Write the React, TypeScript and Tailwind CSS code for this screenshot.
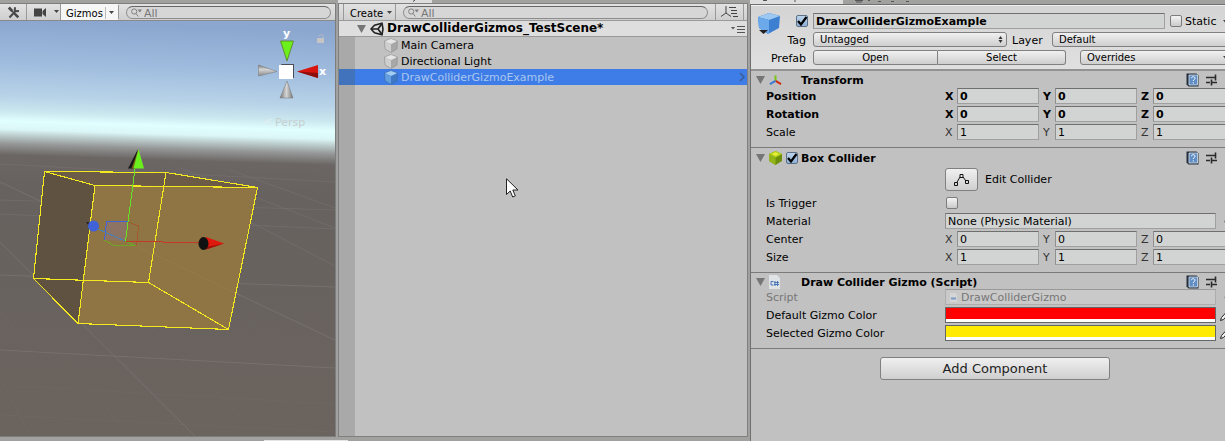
import React from "react";

const buttonFace = "bg-linear-to-b from-[#f0f0f0] to-[#cfcfcf] border border-[#808080]";
const inputFace =
  "h-4 min-w-0 bg-[#d2d4d3] border border-t-[#6f6f6f] border-l-[#8f8f8f] border-r-[#a0a0a0] border-b-[#a0a0a0] pl-0.5 text-black outline-none";

function ToolsIcon() {
  return (
    <svg width="13" height="13" viewBox="0 0 13 13" fill="none" stroke="#4a4a4a" aria-hidden="true">
      <path d="M2.5 11.5 9 4.5" strokeWidth="2" />
      <path d="M8 1.2 7.8 4 9 5.2 12 5" strokeWidth="2" />
      <path d="m1.8 1.5 3.6 3.8" strokeWidth="2.8" />
      <path d="m7.6 7.6 3.7 3.8" strokeWidth="2.6" />
      <path d="m5 5 3 3" strokeWidth="1.4" />
    </svg>
  );
}

function Caret({ className = "" }: { className?: string }) {
  return (
    <svg className={className} width="5" height="3" viewBox="0 0 5 3" aria-hidden="true">
      <path d="M0 0h5L2.5 3z" fill="#444" />
    </svg>
  );
}

function Search({ label }: { label: string }) {
  return (
    <label className="flex h-[13px] min-w-0 flex-1 items-center gap-0.5 rounded-full border border-[#8c8c8c] border-t-[#666] bg-[#d6d6d6] pl-1">
      <svg className="shrink-0" width="11" height="9" viewBox="0 0 11 9" fill="none" stroke="#808080" aria-hidden="true">
        <circle cx="3.2" cy="3.5" r="2.6" />
        <path d="m5 5.5 2.3 3" />
        <path d="M6.5 1.5h4.5L8.8 4.5z" fill="#808080" stroke="none" />
      </svg>
      <input
        aria-label={label}
        placeholder="All"
        className="h-[13px] min-w-0 flex-1 bg-transparent pt-px text-[11px] leading-3 text-[#555] outline-none placeholder:text-[#777]"
      />
    </label>
  );
}

function SceneDrawing() {
  return (
    <svg
      className="block min-h-0 w-full flex-1"
      viewBox="0 21 335 415"
      preserveAspectRatio="xMidYMid slice"
      role="img"
      aria-label="Scene view with a box collider gizmo"
    >
      <defs>
        <linearGradient id="sky" gradientUnits="userSpaceOnUse" x1="0" y1="21" x2="-13" y2="436">
          <stop offset="0" stopColor="#8ca7cf" />
          <stop offset="0.1" stopColor="#9fbcde" />
          <stop offset="0.18" stopColor="#b8d3e8" />
          <stop offset="0.215" stopColor="#cae6ee" />
          <stop offset="0.24" stopColor="#e1ffff" />
          <stop offset="0.26" stopColor="#dbf6f7" />
          <stop offset="0.275" stopColor="#bccccc" />
          <stop offset="0.295" stopColor="#959797" />
          <stop offset="0.322" stopColor="#6b6664" />
          <stop offset="0.4" stopColor="#67625f" />
          <stop offset="1" stopColor="#6b635e" />
        </linearGradient>
        <linearGradient id="greyCone" x1="0" x2="1" y1="0" y2="0">
          <stop offset="0" stopColor="#777" />
          <stop offset="0.5" stopColor="#d4d4d4" />
          <stop offset="1" stopColor="#777" />
        </linearGradient>
        <linearGradient id="greyConeSide" x1="0" x2="0" y1="0" y2="1">
          <stop offset="0" stopColor="#777" />
          <stop offset="0.4" stopColor="#d4d4d4" />
          <stop offset="1" stopColor="#8a8a8a" />
        </linearGradient>
      </defs>
      <rect x="0" y="21" width="335" height="415" fill="url(#sky)" />

      <g stroke="#7a7674" strokeOpacity="0.75" fill="none">
        <path d="M0 242 195 436M0 350 335 368M0 275 335 287M0 182 335 340" />
        <path d="M0 214 335 229M0 200 335 210M150 170 335 266M180 168 335 228M230 170 335 208M0 164 335 182" strokeOpacity="0.5" />
        <path d="M0 378 30 436M0 310 90 436M40 330 130 436M90 325 190 436M150 325 260 436M210 330 330 425M0 385 335 404M0 415 335 432M225 310 335 368" strokeOpacity="0.2" />
      </g>

      <path d="M44 171.500 95 185 78 323 33.500 278.500Z" fill="#5f5241" />
      <path d="M44 171.500 166 172.500 257 187.500 95 185Z" fill="#6c5b47" />
      <path d="M95 185 257 187.500 228.500 329.500 78 323Z" fill="#8f7444" />
      <path d="M134 245 240 295" stroke="#9a8055" strokeOpacity="0.5" />
      <g fill="none" stroke="#f4e91f" strokeWidth="1.1" shapeRendering="crispEdges">
        <path d="M44.500 171.500 166 172.500 257.500 187.500 95 185.500Z" />
        <path d="M33.500 278.500 148.500 282.500 228.500 329.500 78 323.500Z" />
        <path d="M44.500 171.500 33.500 278.500M95 185.500 78 323.500M166 172.500 148.500 282.500M257.500 187.500 228.500 329.500" />
      </g>

      <path d="M106 221h22l-3 20-21-1z" fill="#8c7363" />
      <g fill="none" shapeRendering="crispEdges">
        <path d="m128 222 10.500 4-2 20" stroke="#a2592e" />
        <path d="m104 240 10 5.500 22 .5-11-5" stroke="#70a32a" />
        <path d="M104.500 240.500 106.500 221.500H128" stroke="#3e66d8" />
        <path d="M125 241 98 229" stroke="#4a80b4" />
        <path d="M125 241 200 243" stroke="#c63a25" />
        <path d="M125.500 241 135 169" stroke="#66e324" />
      </g>
      <path d="m138 149-10 19.500h6z" fill="#171717" />
      <path d="m138.500 149-7 19.500h4z" fill="#7a6618" />
      <path d="m138.500 149 5.500 19.500h-10.500z" fill="#6bf01e" />
      <path d="m206 237 18 6.500-18 6z" fill="#e0190f" />
      <path d="m206 247 18-3.500-18 6z" fill="#9c100a" />
      <ellipse cx="203.500" cy="243.500" rx="5" ry="6.500" fill="#111" />
      <path d="m86 222 6 1v7z" fill="#1b1b1b" />
      <circle cx="93.500" cy="226" r="5.500" fill="#3f62d8" />

      <path d="m280.500 41 6.500 20 6.500-20z" fill="#6cf01c" stroke="#5e7d20" strokeWidth=".8" />
      <path d="m318 65-21 6.500 21 6.500z" fill="#d8160f" />
      <path d="m318 73-21-1.500 21 6.500z" fill="#8c0f0b" />
      <path d="m258.500 65 18.500 6.500-18.500 4.500z" fill="url(#greyConeSide)" stroke="#777" strokeWidth=".5" />
      <path d="m287 81-7 17h13z" fill="url(#greyCone)" stroke="#777" strokeWidth=".5" />
      <path d="M281 64h13v14h-5z" fill="#4a4e58" />
      <path d="M279 65h14v14h-14z" fill="#fff" />
      <g fill="#fff" fontFamily="DejaVu Sans, sans-serif" fontSize="11" fontWeight="700">
        <text x="283" y="37">y</text>
        <text x="319" y="75">x</text>
      </g>
      <path d="m272 119-9 3 9 3M264 122h8" fill="none" stroke="#dceef0" />
      <text x="275" y="126" fill="#c6cfd0" fontFamily="DejaVu Sans, sans-serif" fontSize="11">
        Persp
      </text>
      <path d="M317 38h7v5h-7z" fill="#c4c4c4" />
      <path d="M319 36.500c0-2.500 4-2.500 4 0V39" fill="none" stroke="#b9bec6" />
    </svg>
  );
}

function CubeIcon({ blue = false }: { blue?: boolean }) {
  return (
    <svg className="shrink-0" width="14" height="15" viewBox="0 0 14 15" aria-hidden="true">
      <path d="M7 .5 13.500 3 13 11 7 14.500 1 11 .5 3z" fill={blue ? "#3f78c4" : "#a8a8a8"} />
      <path d="M7 .5 13.500 3 7 6 .5 3z" fill={blue ? "#a4cdf4" : "#e6e6e6"} />
      <path d="M.5 3 7 6v8.500L1 11z" fill={blue ? "#629ee0" : "#cfcfcf"} />
      <path d="M7 .5 13.500 3 13 11 7 14.500 1 11 .5 3z" fill="none" stroke={blue ? "#3568ae" : "#8f8f8f"} strokeWidth=".6" />
    </svg>
  );
}

function UnityIcon() {
  return (
    <svg className="shrink-0" width="14" height="14" viewBox="0 0 14 14" fill="none" stroke="#222" aria-hidden="true">
      <path d="M1 7 4.500 3.200 12 1.200 13 7 12 12.800 4.500 10.800z" strokeWidth="1.600" />
      <path d="M1 7h7M8 7l4-5.500M8 7l4 5.500" strokeWidth="1.700" />
    </svg>
  );
}

function Foldout() {
  return (
    <svg className="shrink-0" width="9" height="8" viewBox="0 0 9 8" aria-hidden="true">
      <path d="M0 0h9L4.500 8z" fill="#757575" />
    </svg>
  );
}

function Hierarchy() {
  return (
    <section aria-label="Hierarchy" className="flex min-w-0 flex-col">
      <div className="h-[3px] overflow-hidden">
        <svg className="block" width="94" height="3" aria-hidden="true">
          <path d="M0 0h94v3H0z" fill="#dedede" />
          <path d="m77 0-2 1.500" stroke="#444" />
        </svg>
      </div>
      <div className="flex flex-1 flex-col border border-[#808080] bg-[#c1c1c1]">
        <div className="flex h-4 items-center bg-linear-to-b from-[#e2e2e2] to-[#cfcfcf] text-[11px]">
          <button className="ml-1 flex h-4 w-[53px] items-center gap-1 border-x border-[#999] pt-0.5 pl-1.5 text-[10px]">
            Create <Caret className="mb-0.5" />
          </button>
          <div className="flex min-w-0 flex-1 pt-px pr-[7px] pl-[7px]">
            <Search label="Search hierarchy" />
          </div>
          <button aria-label="Sort objects" className="mr-[3px] flex h-4 w-[29px] items-center justify-center border-x border-[#999]">
            <svg width="17" height="12" viewBox="0 0 17 12" fill="none" stroke="#444" aria-hidden="true">
              <path d="M5 0v7L0 10.500M5 7l5 3.500M8 1.500h7M10 4.500h6M10 7.500h6M12 10.500h5" />
            </svg>
          </button>
        </div>
        <div className="flex h-[17px] items-center border-y border-t-[#999] border-b-[#999] bg-[#dedede] pl-[18px] text-[12px] font-bold">
          <Foldout />
          <span className="flex items-center gap-[3px] pl-1">
            <UnityIcon />
            <span className="whitespace-nowrap">DrawColliderGizmos_TestScene*</span>
          </span>
          <button aria-label="Scene menu" className="mr-0.5 ml-auto">
            <svg className="block" width="14" height="8" viewBox="0 0 14 8" stroke="#555" aria-hidden="true">
              <path d="M0 2h4L2 4.500z" fill="#555" stroke="none" />
              <path d="M6 1.500h8M6 4.500h8M6 7.500h8" />
            </svg>
          </button>
        </div>
        <ul className="flex-1 bg-linear-to-r from-[#a9a9a9] from-[16px] to-[#c1c1c1] to-[16px]">
          <li className="flex h-4 items-center gap-[3px] pl-[45px]">
            <CubeIcon />
            Main Camera
          </li>
          <li className="flex h-4 items-center gap-[3px] pl-[45px]">
            <CubeIcon />
            Directional Light
          </li>
          <li className="flex h-4 items-center gap-[3px] bg-linear-to-r from-[#4173bd] from-[16px] to-[#3e7de7] to-[16px] pr-0.5 pl-[45px] text-[#a9c6ef]">
            <CubeIcon blue />
            DrawColliderGizmoExample
            <svg className="ml-auto" width="6" height="10" viewBox="0 0 6 10" fill="none" stroke="#3b5c94" strokeWidth="1.500" aria-hidden="true">
              <path d="m1 1 4 4-4 4" />
            </svg>
          </li>
        </ul>
      </div>
    </section>
  );
}

function Check({ label, checked = false }: { label: string; checked?: boolean }) {
  return (
    <span className="relative inline-flex size-3 shrink-0">
      <input
        type="checkbox"
        aria-label={label}
        defaultChecked={checked}
        className="peer size-3 appearance-none rounded-[2px] border border-[#7c7c7c] bg-linear-to-b from-[#f4f4f4] to-[#cacaca] checked:border-[#5b7086] checked:from-[#bcd3ea] checked:to-[#8fb2d8]"
      />
      <svg
        className="pointer-events-none absolute inset-0 hidden peer-checked:block"
        width="12"
        height="12"
        viewBox="0 0 12 12"
        fill="none"
        stroke="#000"
        strokeWidth="2.200"
        aria-hidden="true"
      >
        <path d="m2 6 3 3.500L10.500 2" />
      </svg>
    </span>
  );
}

function Popup({ label, value, className }: { label: string; value: string; className: string }) {
  return (
    <span className={`relative flex min-w-0 ${className}`}>
      <select
        id={label}
        className={`${buttonFace} h-[15px] w-full appearance-none rounded-[3px] pl-1.5 text-[10px] leading-3`}
      >
        <option>{value}</option>
      </select>
      <svg className="pointer-events-none absolute top-1 right-1" width="5" height="7" viewBox="0 0 5 7" fill="#333" aria-hidden="true">
        <path d="M2.500 0 4.500 3h-4zM2.500 7 .5 4h4z" />
      </svg>
    </span>
  );
}

function InspectorHeader() {
  return (
    <div className="flex h-16 border-t border-[#f0f0f0] bg-linear-to-b from-[#d4d4d4] to-[#e0e0e0] pt-[7px]">
      <div className="flex w-[62px] shrink-0 flex-col items-end gap-[3px] pr-[7px] leading-[17px]">
        <div className="flex h-4 w-full items-start justify-between pl-[7px]">
          <svg width="22" height="21" viewBox="0 0 22 21" className="shrink-0 overflow-visible" aria-hidden="true">
            <path d="m0 4 11-4 11 3-1 12-11 6L1 15z" fill="#3d7fd0" />
            <path d="m0 4 11-4 11 3-11 4z" fill="#9cc8f2" />
            <path d="m0 4 11 3v14L1 15z" fill="#6ba9ea" />
            <path d="M1 17h9l-4.500 4z" fill="#222" />
          </svg>
          <span className="mr-[-2px] flex pt-0.5">
            <Check label="Active" checked />
          </span>
        </div>
        <label htmlFor="Tag" className="h-[15px]">
          Tag
        </label>
        <span className="h-[15px]">Prefab</span>
      </div>
      <div className="flex min-w-0 flex-1 flex-col gap-[3px]">
        <div className="flex items-center">
          <input
            aria-label="Object name"
            defaultValue="DrawColliderGizmoExample"
            className={`${inputFace} flex-1 font-bold`}
          />
          <div className="flex w-[70px] items-center gap-[3px] pl-[5px]">
            <Check label="Static" />
            Static
            <Caret className="ml-1" />
          </div>
        </div>
        <div className="flex items-center">
          <Popup label="Tag" value="Untagged" className="flex-[194]" />
          <label htmlFor="Layer" className="h-[15px] w-[45px] pl-[5px] leading-[17px]">
            Layer
          </label>
          <Popup label="Layer" value="Default" className="flex-[183]" />
        </div>
        <div className="grid grid-cols-[125fr_128fr_169fr] text-[10px]">
          <button className={`${buttonFace} h-[15px] rounded-l-[3px] leading-3`}>Open</button>
          <button className={`${buttonFace} h-[15px] rounded-r-[3px] border-l-0 leading-3`}>Select</button>
          <button className={`${buttonFace} ml-3.5 flex h-[15px] items-center justify-between rounded-[3px] pr-1.5 pl-1.5 leading-3`}>
            Overrides <Caret />
          </button>
        </div>
      </div>
    </div>
  );
}

function TitleTools({ name }: { name: string }) {
  return (
    <span className="ml-auto flex items-center gap-[7px]">
      <button aria-label={`${name} help`}>
        <svg className="block" width="13" height="14" viewBox="0 0 13 14" aria-hidden="true">
          <path d="M.5.5h10l2 2v11h-10l-2-2z" fill="#26303c" />
          <path d="M3 2h8.500v10H3z" fill="#5f8dc4" stroke="#dbe6f2" strokeWidth=".8" />
          <path d="M5.500 5.200c0-2 3.500-2 3.500 0 0 1.300-1.700 1.200-1.700 2.800M7.300 9.300v1.200" stroke="#fff" fill="none" />
        </svg>
      </button>
      <button aria-label={`${name} presets`}>
        <svg className="block" width="11" height="12" viewBox="0 0 11 12" stroke="#2a2a2a" strokeWidth="1.600" aria-hidden="true">
          <path d="M0 3.500h7M0 8.500h4M6 8.500h5M9.500 .5v6M5.500 5.500v6M7 3.500h3" />
        </svg>
      </button>
      <button aria-label={`${name} menu`}>
        <svg className="block" width="11" height="11" viewBox="0 0 11 11" fill="none" stroke="#555" aria-hidden="true">
          <circle cx="6.500" cy="5.500" r="3" strokeWidth="2" />
          <path d="M1 5.500h2" strokeWidth="2" />
        </svg>
      </button>
    </span>
  );
}

function Title({ name, icon, enabled = false }: { name: string; icon: React.ReactNode; enabled?: boolean }) {
  return (
    <h2 className="flex h-4 items-center pt-0.5 pl-[5px] font-bold">
      <Foldout />
      <span className="flex w-[17px] shrink-0 items-center pl-1">{icon}</span>
      <span className="flex w-[19px] shrink-0 items-center pl-1">
        {enabled && <Check label={`${name} enabled`} checked />}
      </span>
      <span className="whitespace-nowrap">{name}</span>
      <TitleTools name={name} />
    </h2>
  );
}

function Row({ label, children, dim = false }: { label: string; children: React.ReactNode; dim?: boolean }) {
  return (
    <div className={`flex min-h-4 items-center pl-[15px] ${dim ? "text-[#777]" : ""}`}>
      <span className="w-[179px] shrink-0 whitespace-nowrap">{label}</span>
      {children}
    </div>
  );
}

function Vector({ label, value, bold = false }: { label: string; value: string; bold?: boolean }) {
  return (
    <div className={bold ? "font-bold" : ""}>
      <Row label={label}>
        <div className="grid min-w-0 flex-1 grid-cols-3 gap-1">
          {["X", "Y", "Z"].map((axis) => (
            <label key={axis} className="flex min-w-0 items-center">
              <span className={`w-3 shrink-0 ${bold ? "" : "text-[#333]"}`}>{axis}</span>
              <input aria-label={`${label} ${axis}`} defaultValue={value} className={`${inputFace} flex-1`} />
            </label>
          ))}
        </div>
      </Row>
    </div>
  );
}

function ColorField({ label, className }: { label: string; className: string }) {
  return (
    <Row label={label}>
      <button
        aria-label={label}
        className={`h-4 flex-1 border border-[#666] shadow-[inset_0_-3px_0_#fff] ${className}`}
      />
      <svg className="mr-1 ml-1" width="11" height="14" viewBox="0 0 11 14" aria-hidden="true">
        <path d="m.5 12.500 1-3L7 3.500l2 2-5.500 6z" fill="#eee" stroke="#222" />
        <path d="m6 3 3 3 1-4z" fill="#222" />
      </svg>
    </Row>
  );
}

function ScriptIcon() {
  return (
    <svg width="11" height="14" viewBox="0 0 11 14" aria-hidden="true">
      <path d="M0 0h8l3 3v11H0z" fill="#dfe3e6" />
      <path d="M4.500 6.500H2v3.500h2.500M6 6v5M8.500 6v5M5 7.500h5M5 9.500h5" fill="none" stroke="#4a76b8" />
    </svg>
  );
}

function Inspector() {
  return (
    <section aria-label="Inspector" className="flex min-w-0 flex-col overflow-hidden">
      <div className="h-1 shrink-0 overflow-hidden">
        <svg className="block" width="180" height="4" aria-hidden="true">
          <path d="M0 0h93v4H0z" fill="#dedede" />
          <path d="M13 .5h4M45 0v2M105 .5h8M106 2h6M118 .5h2M128 1.500h3M144 1.500h-3M159 1.500h-3" stroke="#555" />
        </svg>
      </div>
      <div className="flex flex-1 flex-col border-t border-l border-[#707070] bg-[#c1c1c1]">
        <div className="-mr-2.5">
          <InspectorHeader />
          <div className="border-t-2 border-[#929292] pb-[7px]">
            <Title
              name="Transform"
              icon={
                <svg width="14" height="13" viewBox="0 0 14 13" fill="none" strokeWidth="2.200" aria-hidden="true">
                  <path d="M7 7V1" stroke="#7cc41c" />
                  <path d="m7 7 6 3.500" stroke="#d62b12" />
                  <path d="m7 7-6 3.500" stroke="#3d78d0" />
                </svg>
              }
            />
            <div className="flex flex-col gap-0.5 pt-px">
              <Vector label="Position" value="0" bold />
              <Vector label="Rotation" value="0" bold />
              <Vector label="Scale" value="1" />
            </div>
          </div>
          <div className="border-t border-[#7a7a7a] pb-[7px]">
            <div className="pt-px">
              <Title
                name="Box Collider"
                enabled
                icon={
                  <svg width="13" height="14" viewBox="0 0 13 14" aria-hidden="true">
                    <path d="M6.500 0 13 3v7l-6.500 4L0 10V3z" fill="#6d8f0c" />
                    <path d="M6.500 0 13 3 6.500 6.500 0 3z" fill="#b9d821" />
                    <path d="m0 3 6.500 3.500V14L0 10z" fill="#93b51a" />
                    <path d="m6.500 1.500 3 1.500-3 1.500-3-1.500z" fill="#f4ee3a" />
                  </svg>
                }
              />
            </div>
            <div className="flex flex-col gap-0.5 pt-[3px]">
              <div className="flex items-center gap-[7px] pb-0.5 pl-[194px]">
                <button
                  id="edit-collider"
                  className={`${buttonFace} flex h-[23px] w-[33px] items-center justify-center rounded-[3px] border-[#555]`}
                  aria-label="Edit Collider"
                >
                  <svg width="15" height="12" viewBox="0 0 15 12" fill="none" stroke="#111" aria-hidden="true">
                    <path d="M2.500 9 6 3M9 3l3 4M.5 8.500h3v3h-3zM6 .5h3v3H6zM11.500 6.500h3v3h-3z" />
                  </svg>
                </button>
                <label htmlFor="edit-collider">Edit Collider</label>
              </div>
              <Row label="Is Trigger">
                <span className="flex pl-px">
                  <Check label="Is Trigger" />
                </span>
              </Row>
              <Row label="Material">
                <input aria-label="Material" defaultValue="None (Physic Material)" className={`${inputFace} flex-1`} />
                <svg className="mr-0.5 ml-2" width="9" height="9" viewBox="0 0 9 9" fill="none" stroke="#333" aria-hidden="true">
                  <circle cx="4.500" cy="4.500" r="3.500" />
                  <circle cx="4.500" cy="4.500" r="1" fill="#333" />
                </svg>
              </Row>
              <Vector label="Center" value="0" />
              <Vector label="Size" value="1" />
            </div>
          </div>
          <div className="border-t border-[#7a7a7a] pb-[7px]">
            <Title name="Draw Collider Gizmo (Script)" icon={<ScriptIcon />} />
            <div className="flex flex-col gap-0.5">
              <Row label="Script" dim>
                <span className="flex h-4 min-w-0 flex-1 items-center gap-1 border border-[#adadad] border-t-[#999] bg-[#c9c9c9] pl-1">
                  <svg width="7" height="9" viewBox="0 0 7 9" aria-hidden="true">
                    <path d="M0 0h5l2 2v7H0z" fill="#d3d5d7" />
                    <path d="M1 5.500h5" stroke="#7d9cc4" strokeWidth="2" />
                  </svg>
                  DrawColliderGizmo
                </span>
                <svg className="mr-0.5 ml-2" width="9" height="9" viewBox="0 0 9 9" fill="none" stroke="#777" aria-hidden="true">
                  <circle cx="4.500" cy="4.500" r="3.500" />
                </svg>
              </Row>
              <ColorField label="Default Gizmo Color" className="bg-[#ff0000]" />
              <ColorField label="Selected Gizmo Color" className="bg-[#ffea04]" />
            </div>
          </div>
        </div>
        <div className="flex justify-center border-t border-[#7a7a7a] pt-2 pl-[14px]">
          <button className={`${buttonFace} h-[23px] w-[230px] rounded-[3px] border-[#555] text-[13px] leading-4 text-[#222]`}>
            Add Component
          </button>
        </div>
      </div>
    </section>
  );
}

export default function App() {
  return (
    <div className="relative grid min-h-screen grid-cols-[336fr_410fr_475fr] gap-x-0.5 bg-[#a1a1a0] font-['DejaVu_Sans',sans-serif] text-[11px] leading-[15px] text-black">
      <section aria-label="Scene" className="flex min-w-0 flex-col pt-[3px] pb-1">
        <div className="flex flex-1 flex-col border-y border-r border-[#7d7d7d]">
          <div className="flex h-[17px] shrink-0 items-center border-b border-[#8a8a8a] bg-linear-to-b from-[#e2e2e2] to-[#cfcfcf] text-[10px]">
            <button aria-label="Tools" className="flex h-4 w-[27px] items-center justify-center border-r border-[#999]">
              <ToolsIcon />
            </button>
            <button aria-label="Camera settings" className="flex h-4 w-[34px] items-center gap-2 border-r border-[#999] pl-[7px]">
              <svg width="12" height="9" viewBox="0 0 12 9" fill="#444" aria-hidden="true">
                <path d="M0 .5h8v8H0zM8.500 3 12 0v9L8.500 6z" />
              </svg>
              <Caret className="mb-0.5" />
            </button>
            <button className="flex h-4 w-[57px] items-center bg-[#f6f6f6] pt-0.5 pl-[5px]">
              Gizmos
              <span className="ml-auto flex h-3 items-center border-l border-[#bbb] pr-1 pl-[3px]">
                <Caret className="mb-0.5" />
              </span>
            </button>
            <div className="flex min-w-0 flex-1 border-l border-[#999] pt-px pr-1 pl-[7px]">
              <Search label="Search scene" />
            </div>
          </div>
          <SceneDrawing />
        </div>
      </section>
      <div className="flex min-w-0 pb-1">
        <div className="grid min-w-0 flex-1">
          <Hierarchy />
        </div>
      </div>
      <Inspector />
      <svg className="pointer-events-none absolute top-[178px] left-[506px]" width="13" height="20" viewBox="0 0 13 20" aria-hidden="true">
        <path d="M.5.800v15.700l3.700-3.500 2.500 6 2.600-1.100-2.500-5.900h5.200z" fill="#fff" stroke="#222" />
      </svg>
      <div className="absolute bottom-0 left-[264px] h-px w-[84px] bg-[#e4e4e4]" />
    </div>
  );
}
